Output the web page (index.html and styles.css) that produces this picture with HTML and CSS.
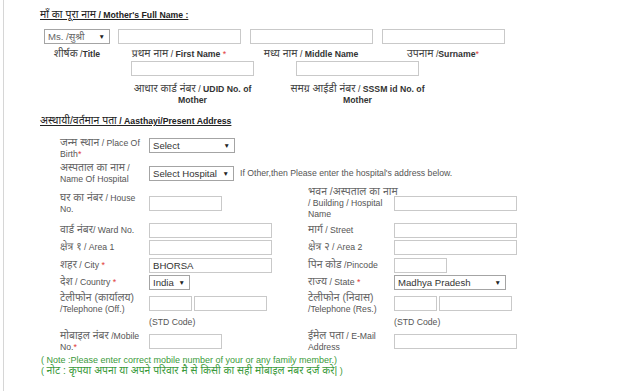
FILE: index.html
```html
<!DOCTYPE html>
<html lang="hi">
<head>
    <meta charset="UTF-8">
    <title>Mother's Details</title>
    <link rel="stylesheet" href="styles.css">
</head>
<body>
    <div class="page">
        <h3 class="sec-title"><span class="hi">माँ का पूरा नाम</span> / Mother's Full Name :</h3>

        <div class="name-grid">
            <div class="cell">
                <span class="sel"><select class="sel-title"><option>Ms. /सुश्री</option></select></span>
            </div>
            <div class="cell"><input type="text" class="txt w-lg"></div>
            <div class="cell"><input type="text" class="txt w-lg"></div>
            <div class="cell"><input type="text" class="txt w-lg"></div>
            <div class="cell top-lbl"><span class="hi">शीर्षक</span> /<b>Title</b></div>
            <div class="cell top-lbl"><span class="hi">प्रथम नाम</span> / <b>First Name</b> <span class="req">*</span></div>
            <div class="cell top-lbl"><span class="hi">मध्य नाम</span> / <b>Middle Name</b></div>
            <div class="cell top-lbl"><span class="hi">उपनाम</span> /<b>Surname</b><span class="req">*</span></div>
        </div>

        <div class="id-grid">
            <div class="cell"><input type="text" class="txt w-lg"></div>
            <div class="cell"><input type="text" class="txt w-lg"></div>
            <div class="cell top-lbl"><span class="hi">आधार कार्ड नंबर</span> / <b>UDID No. of<br>Mother</b></div>
            <div class="cell top-lbl"><span class="hi">समग्र आईडी नंबर</span> / <b>SSSM id No. of<br>Mother</b></div>
        </div>

        <h3 class="sec-title sec-gap"><span class="hi">अस्थायी/वर्तमान पता</span> / Aasthayi/Present Address</h3>

        <div class="addr-grid">
            <div class="lbl"><span class="hi">जन्म स्थान</span> / Place Of<br>Birth<span class="req">*</span></div>
            <div class="fld fld-top"><span class="sel"><select class="sel-birth"><option>Select</option></select></span></div>
            <div></div>
            <div></div>

            <div class="lbl"><span class="hi">अस्पताल का नाम</span> /<br>Name Of Hospital</div>
            <div class="fld span-3">
                <span class="sel"><select class="sel-hosp"><option>Select Hospital</option></select></span>
                <span class="hint">If Other,then Please enter the hospital's address below.</span>
            </div>

            <div class="lbl"><span class="hi">घर का नंबर</span> / House<br>No.</div>
            <div class="fld"><input type="text" class="txt w-md"></div>
            <div class="lbl"><span class="hi">भवन /अस्पताल का नाम</span><br>/ Building / Hospital<br>Name</div>
            <div class="fld"><input type="text" class="txt w-lg"></div>

            <div class="lbl"><span class="hi">वार्ड नंबर</span>/ Ward No.</div>
            <div class="fld"><input type="text" class="txt w-lg"></div>
            <div class="lbl"><span class="hi">मार्ग</span> / Street</div>
            <div class="fld"><input type="text" class="txt w-lg"></div>

            <div class="lbl"><span class="hi">क्षेत्र १</span> / Area 1</div>
            <div class="fld"><input type="text" class="txt w-lg"></div>
            <div class="lbl"><span class="hi">क्षेत्र २</span> / Area 2</div>
            <div class="fld"><input type="text" class="txt w-lg"></div>

            <div class="lbl"><span class="hi">शहर</span> / City <span class="req">*</span></div>
            <div class="fld"><input type="text" class="txt w-lg" value="BHORSA"></div>
            <div class="lbl"><span class="hi">पिन कोड</span> /Pincode</div>
            <div class="fld"><input type="text" class="txt w-pin"></div>

            <div class="lbl"><span class="hi">देश</span> / Country <span class="req">*</span></div>
            <div class="fld"><span class="sel"><select class="sel-country"><option>India</option></select></span></div>
            <div class="lbl"><span class="hi">राज्य</span> / State <span class="req">*</span></div>
            <div class="fld"><span class="sel"><select class="sel-state"><option>Madhya Pradesh</option></select></span></div>

            <div class="lbl"><span class="hi">टेलीफोन (कार्यालय)</span><br>/Telephone (Off.)</div>
            <div class="fld phone">
                <input type="text" class="txt w-std">
                <input type="text" class="txt w-md">
            </div>
            <div class="lbl"><span class="hi">टेलीफोन (निवास)</span><br>/Telephone (Res.)</div>
            <div class="fld phone">
                <input type="text" class="txt w-std">
                <input type="text" class="txt w-md">
            </div>

            <div></div>
            <div class="std">(STD Code)</div>
            <div></div>
            <div class="std">(STD Code)</div>

            <div class="lbl"><span class="hi">मोबाइल नंबर</span> /Mobile<br>No.<span class="req">*</span></div>
            <div class="fld"><input type="text" class="txt w-md"></div>
            <div class="lbl"><span class="hi">ईमेल पता</span> / E-Mail<br>Address</div>
            <div class="fld"><input type="text" class="txt w-lg"></div>
        </div>

        <p class="note">( Note :Please enter correct mobile number of your or any family member.)<br>( <span class="hi">नोट : कृपया अपना या अपने परिवार मै से किसी का सही मोबाइल नंबर दर्ज करे|</span> )</p>
    </div>
</body>
</html>
```

FILE: styles.css
```css
* {
    box-sizing: border-box;
}
body {
    margin: 0;
    background: #fff;
    font-family: "Liberation Sans", Arial, "Noto Sans Devanagari", "Noto Sans", sans-serif;
}
.page {
    margin-left: 3px;
    min-height: 100vh;
    border-left: 1px solid #d6d6d6;
    padding: 9px 0 10px 36px;
    font-size: 8.7px;
    line-height: 11px;
    color: #555;
}
.hi {
    font-size: 1.2em;
    font-weight: normal;
    line-height: 0;
}
.sec-title {
    margin: 0 0 8px 0;
    font-size: 8.7px;
    line-height: 12px;
    font-weight: bold;
    color: #222;
    text-decoration: underline;
}
.sec-gap {
    margin-top: 9px;
    margin-bottom: 11px;
}
.name-grid {
    display: grid;
    grid-template-columns: 72px 132px 132px 132px;
    row-gap: 5px;
    margin-left: 1px;
}
.id-grid {
    display: grid;
    grid-template-columns: 165px 165px;
    row-gap: 8px;
    margin: 1px 0 0 70px;
}
.cell {
    display: flex;
    justify-content: center;
    text-align: center;
}
.top-lbl {
    display: block;
    color: #333;
}
.top-lbl .hi {
    color: #444;
}
.req {
    color: #e23a3a;
    font-weight: normal;
}
.txt {
    height: 15px;
    padding: 0 3px;
    border: 1px solid #c9c9c9;
    background: #fff;
    font-family: inherit;
    font-size: 9.6px;
    color: #333;
    outline: none;
}
.w-lg { width: 123px; }
.w-md { width: 73px; }
.w-pin { width: 53px; }
.w-std { width: 43px; }

.sel {
    position: relative;
    display: inline-block;
    height: 15px;
}
.sel select {
    -webkit-appearance: none;
    appearance: none;
    display: block;
    height: 15px;
    padding: 0 14px 0 3px;
    border: 1px solid #a4a4a4;
    border-radius: 0;
    background: #fff;
    font-family: inherit;
    font-size: 9.6px;
    line-height: 13px;
    color: #333;
}
.sel::after {
    content: "\25BC";
    position: absolute;
    right: 5px;
    top: 3px;
    font-size: 6.5px;
    line-height: 9px;
    color: #222;
    pointer-events: none;
}
.sel-title {
    width: 66px;
    color: #666 !important;
}
.sel-birth { width: 86px; }
.sel-hosp { width: 85px; }
.sel-country { width: 41px; }
.sel-state { width: 112px; }

.addr-grid {
    display: grid;
    grid-template-columns: 89px 159px 86px auto;
    row-gap: 2.5px;
    margin-left: 20px;
    align-items: center;
}
.lbl {
    white-space: nowrap;
    color: #555;
}
.lbl .hi {
    color: #666;
}
.fld {
    display: flex;
    align-items: center;
    min-height: 15px;
}
.fld-top {
    align-self: start;
    margin-top: 0;
}
.span-3 {
    grid-column: span 3;
    gap: 6px;
}
.hint {
    color: #555;
}
.phone {
    gap: 2px;
}
.std {
    color: #555;
}
.note {
    margin: 2px 0 0 1px;
    font-size: 9px;
    color: #3a9a3a;
    line-height: 11px;
}
.note .hi {
    font-size: 1.15em;
}
```
